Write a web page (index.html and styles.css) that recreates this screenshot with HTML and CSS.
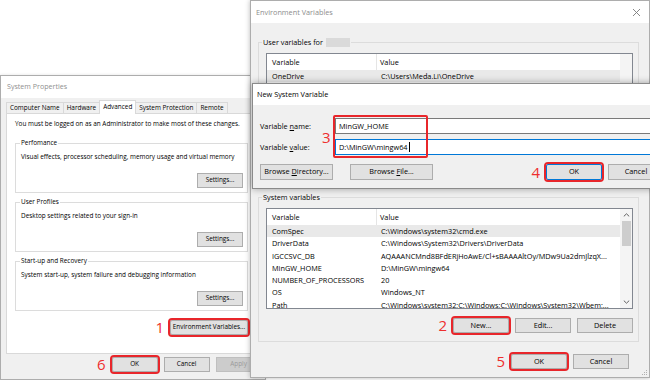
FILE: index.html
```html
<!DOCTYPE html>
<html lang="en">
<head>
<meta charset="utf-8">
<title>Environment Variables</title>
<link rel="stylesheet" href="styles.css">
</head>
<body>
<main class="desk">

  <section class="win sp">
    <header class="sp-title">System Properties</header>
    <nav class="tabs">
      <span class="tab">Computer Name</span>
      <span class="tab">Hardware</span>
      <span class="tab tab-on">Advanced</span>
      <span class="tab">System Protection</span>
      <span class="tab">Remote</span>
    </nav>
    <div class="panel">
      <p class="note">You must be logged on as an Administrator to make most of these changes.</p>
      <fieldset class="grp">
        <legend>Perfomance</legend>
        <p class="grp-text">Visual effects, processor scheduling, memory usage and virtual memory</p>
        <div class="grp-act"><span class="btn btn-set"><span>Settings...</span></span></div>
      </fieldset>
      <fieldset class="grp">
        <legend>User Profiles</legend>
        <p class="grp-text">Desktop settings related to your sign-in</p>
        <div class="grp-act"><span class="btn btn-set"><span>Settings...</span></span></div>
      </fieldset>
      <fieldset class="grp">
        <legend>Start-up and Recovery</legend>
        <p class="grp-text">System start-up, system failure and debugging information</p>
        <div class="grp-act"><span class="btn btn-set"><span>Settings...</span></span></div>
      </fieldset>
      <div class="env-act"><span class="num">1</span><span class="btn btn-env hl"><span>Environment Variables...</span></span></div>
    </div>
    <footer class="sp-foot">
      <span class="num">6</span>
      <span class="btn btn-sp hl"><span>OK</span></span>
      <span class="btn btn-sp"><span>Cancel</span></span>
      <span class="btn btn-sp btn-dis"><span>Apply</span></span>
    </footer>
  </section>

  <section class="win ev">
    <header class="ev-title">
      <span>Environment Variables</span>
      <svg class="close" width="9" height="9" viewBox="0 0 9 9"><path d="M1 1L8 8M8 1L1 8" stroke="#7a7a7a" stroke-width="0.9" fill="none"/></svg>
    </header>
    <div class="ev-body">
      <fieldset class="grp2 grp-user">
        <legend>User variables for <span class="blur"></span></legend>
        <div class="list list-user">
          <div class="list-main">
            <div class="row row-head"><span>Variable</span><span>Value</span></div>
            <div class="row row-sel"><span>OneDrive</span><span>C:\Users\Meda.Li\OneDrive</span></div>
          </div>
          <div class="sbar"></div>
        </div>
      </fieldset>
      <fieldset class="grp2 grp-sys">
        <legend>System variables</legend>
        <div class="list list-sys">
          <div class="list-main">
            <div class="row row-head"><span>Variable</span><span>Value</span></div>
            <div class="row row-sel"><span>ComSpec</span><span>C:\Windows\system32\cmd.exe</span></div>
            <div class="row"><span>DriverData</span><span>C:\Windows\System32\Drivers\DriverData</span></div>
            <div class="row"><span>IGCCSVC_DB</span><span>AQAAANCMnd8BFdERjHoAwE/Cl+sBAAAAltOy/MDw9Ua2dmJlzqX...</span></div>
            <div class="row"><span>MinGW_HOME</span><span>D:\MinGW\mingw64</span></div>
            <div class="row"><span>NUMBER_OF_PROCESSORS</span><span>20</span></div>
            <div class="row"><span>OS</span><span>Windows_NT</span></div>
            <div class="row"><span>Path</span><span>C:\Windows\system32;C:\Windows;C:\Windows\System32\Wbem;...</span></div>
          </div>
          <div class="sbar">
            <span class="sb-arrow"><svg width="7" height="4" viewBox="0 0 7 4"><path d="M0.8 3.4L3.5 0.8L6.2 3.4" stroke="#606060" stroke-width="1" fill="none"/></svg></span>
            <span class="thumb"></span>
            <span class="sb-fill"></span>
            <span class="sb-arrow"><svg width="7" height="4" viewBox="0 0 7 4"><path d="M0.8 0.6L3.5 3.2L6.2 0.6" stroke="#606060" stroke-width="1" fill="none"/></svg></span>
          </div>
        </div>
        <div class="list-act">
          <span class="num">2</span>
          <span class="btn btn-ev hl"><span>New...</span></span>
          <span class="btn btn-ev"><span>Edit...</span></span>
          <span class="btn btn-ev"><span>Delete</span></span>
        </div>
      </fieldset>
      <div class="ev-foot">
        <span class="num">5</span>
        <span class="btn btn-ev hl"><span>OK</span></span>
        <span class="btn btn-ev"><span>Cancel</span></span>
      </div>
    </div>
    <svg class="grip" width="7" height="7" viewBox="0 0 7 7"><g fill="#b0b0b0"><rect x="5" y="1" width="1" height="1"/><rect x="3" y="3" width="1" height="1"/><rect x="5" y="3" width="1" height="1"/><rect x="1" y="5" width="1" height="1"/><rect x="3" y="5" width="1" height="1"/><rect x="5" y="5" width="1" height="1"/></g></svg>
  </section>

  <section class="win nv">
    <header class="nv-title">New System Variable</header>
    <div class="nv-body">
      <div class="field"><label class="lbl">Variable <u>n</u>ame:</label><div class="input"><span>MinGW_HOME</span></div></div>
      <div class="field"><label class="lbl">Variable <u>v</u>alue:</label><div class="input input-focus"><span>D:\MinGW\mingw64</span><span class="caret"></span></div></div>
      <div class="nv-act">
        <span class="btn btn-br1"><span>Browse <u>D</u>irectory...</span></span>
        <span class="btn btn-br2"><span>Browse <u>F</u>ile...</span></span>
        <span class="num num4">4</span>
        <span class="btn btn-ev btn-def hl"><span>OK</span></span>
        <span class="btn btn-ev"><span>Cancel</span></span>
      </div>
      <div class="mark3"><span class="num num3">3</span></div>
    </div>
  </section>

</main>
</body>
</html>
```

FILE: styles.css
```css
* { box-sizing: border-box; }
html, body { margin: 0; padding: 0; width: 650px; height: 380px; overflow: hidden; background: #fff; }
body { font-family: "Open Sans", "Noto Sans", sans-serif; color: #000; }
p { margin: 0; }
u { text-decoration-thickness: 0.6px; text-underline-offset: 1px; }

.desk { position: relative; width: 650px; height: 380px; overflow: hidden; }
.win { position: absolute; background: #f0f0f0; border: 1px solid #adadad; }

/* shared controls */
.btn {
  display: flex; align-items: center; justify-content: center;
  height: 15px; border: 1px solid #adadad; background: #e1e1e1;
  white-space: nowrap; line-height: 1;
}
.btn-dis { background: #cccccc; border-color: #bfbfbf; color: #9a9a9a; }
.btn-def { border-color: #0078d7; }
.hl { outline: 2px solid #e8262b; outline-offset: 0; border-radius: 2px; }
.num { font-size: 15px; line-height: 15px; color: #ee2e2e; font-family: "Open Sans", sans-serif; }

/* System Properties */
.sp { left: 0; top: 75px; width: 266px; height: 305px; font-size: 6.4px; box-shadow: 0 0 3px rgba(0,0,0,.12); }
.sp-title { height: 22px; line-height: 21px; padding-left: 6px; background: #fff; font-size: 7.1px; color: #8f8f8f; }
.tabs { display: flex; align-items: flex-end; height: 15px; padding-left: 5px; }
.tab {
  height: 11px; line-height: 10px; padding: 0 3px; margin-right: -1px;
  border: 1px solid #d9d9d9; border-bottom: none; background: #f0f0f0; white-space: nowrap;
}
.tab-on { height: 14px; margin-bottom: -1px; background: #fff; position: relative; z-index: 1; line-height: 12px; padding: 0 3px; }
.panel {
  margin-left: 5px; width: 251px; height: 241px; background: #fff;
  border: 1px solid #d9d9d9; padding: 5px 8px 0;
}
.note { line-height: 10px; white-space: nowrap; }
.grp { margin: 9px 0 0; padding: 0 4px 4px 5px; border: 1px solid #dcdcdc; min-width: 0; }
.grp + .grp { margin-top: 4px; }
.grp legend { padding: 0 1px; margin-left: -1px; line-height: 10px; }
.grp-text { margin-top: 3.5px; line-height: 10px; white-space: nowrap; }
.grp-act { display: flex; justify-content: flex-end; margin-top: 11.5px; }
.btn-set { width: 46px; }
.env-act { display: flex; justify-content: flex-end; align-items: center; gap: 6px; margin-top: 9px; }
.btn-env { width: 78px; }
.sp-foot { display: flex; align-items: center; gap: 6px; height: 21px; padding-left: 96px; }
.btn-sp { width: 46px; }

/* Environment Variables */
.ev { left: 250px; top: 0; width: 400px; height: 378px; font-size: 7.3px; box-shadow: 0 0 5px rgba(0,0,0,.28); }
.ev-title {
  height: 22px; background: #fff; color: #8c8c8c; display: flex; align-items: center;
  justify-content: space-between; padding: 0 8px 0 5px;
}
.close { display: block; }
.ev-body { padding: 14px 10px 0 7px; }
.grp2 { margin: 0; padding: 0 5px 0 7px; border: 1px solid #dcdcdc; min-width: 0; }
.grp2 legend { padding: 0 1px; margin-left: -4px; line-height: 10px; white-space: nowrap; }
.blur { display: inline-block; width: 24px; height: 9px; background: #dadada; vertical-align: -2px; margin-left: 1px; filter: blur(0.5px); }
.grp-user { height: 149px; }
.grp-sys { margin-top: 6px; padding-bottom: 8px; }
.list { display: flex; margin-top: 6px; border: 1px solid #828790; background: #fff; overflow: hidden; }
.list-user { height: 120px; }
.list-sys { height: 101px; }
.list-main { flex: 1; min-width: 0; }
.row { display: grid; grid-template-columns: 110px 1fr; height: 12.25px; line-height: 12.25px; white-space: nowrap; }
.row span { overflow: hidden; padding-left: 5px; }
.row span + span { padding-left: 4px; }
.row-head { height: 16px; line-height: 16px; }
.row-head span:first-child { border-right: 1px solid #e5e5e5; }
.row-head span + span { padding-left: 3px; }
.row-sel { background: #e9e9e9; }
.sbar { width: 12px; background: #f4f4f4; display: flex; flex-direction: column; align-items: center; }
.sb-arrow { height: 12px; display: flex; align-items: center; justify-content: center; }
.sb-arrow svg { display: block; }
.thumb { width: 9px; height: 25px; background: #cdcdcd; }
.sb-fill { flex: 1; }
.list-act { display: flex; justify-content: flex-end; align-items: center; gap: 6px; margin-top: 9px; }
.btn-ev { width: 56px; }
.ev-foot { display: flex; justify-content: flex-end; align-items: center; gap: 6px; margin-top: 12px; padding-right: 10px; }
.grip { position: absolute; right: 1px; bottom: 1px; display: block; }

/* New System Variable */
.nv { left: 252px; top: 83px; width: 420px; height: 106px; font-size: 7.3px; border-color: #8a8a8a; box-shadow: 0 0 7px rgba(0,0,0,.35); }
.nv-title { height: 21px; line-height: 21px; padding-left: 4px; background: #fff; }
.nv-body { position: relative; padding: 13px 7px 8px; }
.field { display: flex; align-items: center; height: 16px; }
.field + .field { margin-top: 5px; }
.lbl { width: 75px; flex: none; white-space: nowrap; }
.input {
  flex: 1; height: 16px; border: 1px solid #7a7a7a; background: #fff;
  padding-left: 3px; display: flex; align-items: center; white-space: nowrap;
}
.input-focus { border-color: #0078d7; }
.caret { display: inline-block; width: 1px; height: 10px; background: #000; margin-left: 1px; }
.nv-act { display: flex; align-items: center; height: 16px; margin-top: 9px; }
.btn-br1 { width: 73px; height: 16px; }
.btn-br2 { width: 83px; height: 16px; margin-left: 17px; }
.num4 { margin-left: auto; margin-right: 6px; }
.nv-act .btn-ev { height: 16px; }
.nv-act .btn-ev + .btn-ev { margin-left: 6px; }
.mark3 { position: absolute; left: 80px; top: 10px; width: 95px; height: 43px; border: 2px solid #e8262b; border-radius: 2px; }
.num3 { position: absolute; left: -13px; top: 13px; }
```
